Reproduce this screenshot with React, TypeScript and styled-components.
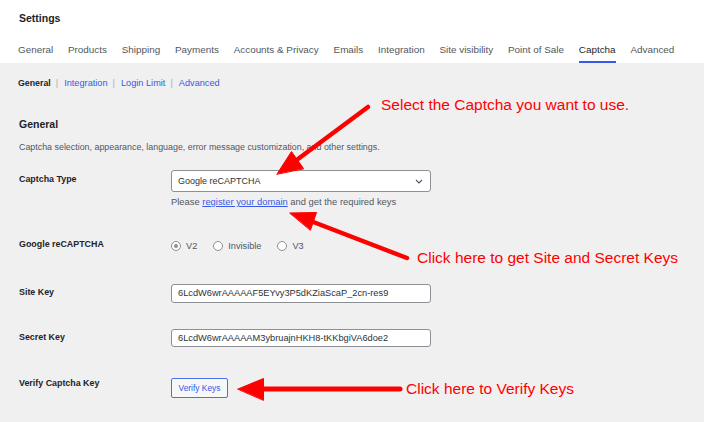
import React from "react";
import styled, { createGlobalStyle } from "styled-components";

const Global = createGlobalStyle`
  html, body { margin: 0; padding: 0; background: #f0f0f1; }
  body { font-family: "Liberation Sans", Arial, sans-serif; color: #1d2327; }
  * { box-sizing: border-box; }
`;

const Page = styled.div`
  position: relative;
  width: 704px;
  height: 422px;
  overflow: hidden;
  background: #f0f0f1;
`;

const Header = styled.header`
  background: #ffffff;
  padding: 10px 0 0 19px;
  height: 63px;
`;

const Title = styled.h1`
  margin: 0;
  font-size: 10.5px;
  line-height: 16px;
  font-weight: 700;
  color: #1d2327;
`;

const Tabs = styled.nav`
  display: flex;
  gap: 14.8px;
  margin-top: 10px;
  margin-left: -1px;
`;

const Tab = styled.span<{ $active?: boolean }>`
  display: block;
  font-size: 9.9px;
  line-height: 12px;
  padding: 8px 0 5px;
  color: ${(p) => (p.$active ? "#1e1e1e" : "#50575e")};
  border-bottom: 2px solid ${(p) => (p.$active ? "#3858e9" : "transparent")};
`;

const Main = styled.main`
  padding: 14px 0 0 19px;
`;

const SubNav = styled.div`
  display: flex;
  align-items: center;
  font-size: 9.2px;
  line-height: 12px;
  margin-left: -1px;
`;

const SubCurrent = styled.span`
  font-weight: 700;
  font-size: 8.8px;
  color: #1d2327;
`;

const SubLink = styled.span`
  color: #3858e9;
`;

const Sep = styled.span`
  color: #a7aaad;
  margin: 0 6px 0 5px;
`;

const Heading = styled.h2`
  margin: 28px 0 0;
  font-size: 10.5px;
  line-height: 14px;
  font-weight: 700;
  color: #1d2327;
`;

const Desc = styled.p`
  margin: 10px 0 0;
  font-size: 8.9px;
  line-height: 12px;
  color: #50575e;
`;

const Row = styled.div<{ $gap: number }>`
  display: grid;
  grid-template-columns: 152px 260px;
  align-items: start;
  margin-top: ${(p) => p.$gap}px;
`;

const Label = styled.div<{ $shift: number }>`
  font-size: 8.9px;
  line-height: 12px;
  font-weight: 700;
  color: #1d2327;
  margin-top: ${(p) => p.$shift}px;
`;

const Field = styled.div`
  display: flex;
  flex-direction: column;
`;

const Select = styled.div`
  display: flex;
  align-items: center;
  justify-content: space-between;
  height: 22px;
  padding: 0 7px 0 6px;
  background: #ffffff;
  border: 1px solid #8c8f94;
  border-radius: 3px;
  font-size: 9px;
  color: #2c3338;
`;

const Help = styled.div`
  margin-top: 4px;
  font-size: 9.4px;
  line-height: 12px;
  color: #50575e;
`;

const HelpLink = styled.span`
  color: #3858e9;
  text-decoration: underline;
`;

const Radios = styled.div`
  display: flex;
  align-items: center;
  height: 16px;
  gap: 16px;
`;

const RadioItem = styled.label`
  display: flex;
  align-items: center;
  gap: 5px;
  font-size: 9.2px;
  color: #50575e;
`;

const Circle = styled.span<{ $checked?: boolean }>`
  position: relative;
  width: 10px;
  height: 10px;
  border-radius: 50%;
  border: 1px solid #8c8f94;
  background: #ffffff;
  &::after {
    content: "";
    display: ${(p) => (p.$checked ? "block" : "none")};
    position: absolute;
    left: 2px;
    top: 2px;
    width: 4px;
    height: 4px;
    border-radius: 50%;
    background: #8c8f94;
  }
`;

const Input = styled.div`
  display: flex;
  align-items: center;
  height: 18.5px;
  padding: 0 6px;
  background: #ffffff;
  border: 1px solid #8c8f94;
  border-radius: 3px;
  font-size: 9.25px;
  color: #2c3338;
  white-space: nowrap;
`;

const Button = styled.div`
  display: flex;
  align-items: center;
  justify-content: center;
  width: 57px;
  height: 20px;
  background: #f6f7f7;
  border: 1px solid #4b6df0;
  border-radius: 2px;
  font-size: 8.4px;
  color: #3858e9;
`;

const Overlay = styled.svg`
  position: absolute;
  left: 0;
  top: 0;
  pointer-events: none;
`;

const Note = styled.div<{ $x: number; $y: number }>`
  position: absolute;
  left: ${(p) => p.$x}px;
  top: ${(p) => p.$y}px;
  font-size: 15.5px;
  line-height: 18px;
  color: #ff0000;
  white-space: nowrap;
`;

const tabs = [
  "General",
  "Products",
  "Shipping",
  "Payments",
  "Accounts & Privacy",
  "Emails",
  "Integration",
  "Site visibility",
  "Point of Sale",
  "Captcha",
  "Advanced",
];

export default function App() {
  return (
    <Page>
      <Global />
      <Header>
        <Title>Settings</Title>
        <Tabs>
          {tabs.map((t) => (
            <Tab key={t} $active={t === "Captcha"}>
              {t}
            </Tab>
          ))}
        </Tabs>
      </Header>
      <Main>
        <SubNav>
          <SubCurrent>General</SubCurrent>
          <Sep>|</Sep>
          <SubLink>Integration</SubLink>
          <Sep>|</Sep>
          <SubLink>Login Limit</SubLink>
          <Sep>|</Sep>
          <SubLink>Advanced</SubLink>
        </SubNav>
        <Heading>General</Heading>
        <Desc>
          Captcha selection, appearance, language, error message customization, and other settings.
        </Desc>

        <Row $gap={17}>
          <Label $shift={3}>Captcha Type</Label>
          <Field>
            <Select>
              <span>Google reCAPTCHA</span>
              <svg width="8" height="5" viewBox="0 0 8 5">
                <path d="M1 1l3 3 3-3" fill="none" stroke="#50575e" strokeWidth="1.1" />
              </svg>
            </Select>
            <Help>
              Please <HelpLink>register your domain</HelpLink> and get the required keys
            </Help>
          </Field>
        </Row>

        <Row $gap={30}>
          <Label $shift={0}>Google reCAPTCHA</Label>
          <Radios>
            <RadioItem>
              <Circle $checked />
              V2
            </RadioItem>
            <RadioItem>
              <Circle />
              Invisible
            </RadioItem>
            <RadioItem>
              <Circle />
              V3
            </RadioItem>
          </Radios>
        </Row>

        <Row $gap={30}>
          <Label $shift={2}>Site Key</Label>
          <Input>6LcdW6wrAAAAAF5EYvy3P5dKZiaScaP_2cn-res9</Input>
        </Row>

        <Row $gap={26}>
          <Label $shift={2.5}>Secret Key</Label>
          <Input>6LcdW6wrAAAAAM3ybruajnHKH8-tKKbgiVA6doe2</Input>
        </Row>

        <Row $gap={31}>
          <Label $shift={-1.5}>Verify Captcha Key</Label>
          <div>
            <Button>Verify Keys</Button>
          </div>
        </Row>
      </Main>

      <Overlay width="704" height="422" viewBox="0 0 704 422">
        <g fill="#ff0000" stroke="#ff0000" strokeLinecap="round">
          <line x1="368" y1="107" x2="298" y2="159" strokeWidth="4.5" />
          <polygon points="277,174 291.5,151.5 303.5,168.5" strokeWidth="1" strokeLinejoin="round" />
          <line x1="407" y1="258" x2="312" y2="221.5" strokeWidth="4.5" />
          <polygon points="290,213 316.5,212.5 310.5,230" strokeWidth="1" strokeLinejoin="round" />
          <line x1="400" y1="389" x2="262" y2="389" strokeWidth="5" />
          <polygon points="238,389 263.5,378.5 263.5,400" strokeWidth="1" strokeLinejoin="round" />
        </g>
      </Overlay>
      <Note $x={381} $y={96}>Select the Captcha you want to use.</Note>
      <Note $x={417} $y={249}>Click here to get Site and Secret Keys</Note>
      <Note $x={406} $y={380}>Click here to Verify Keys</Note>
    </Page>
  );
}
